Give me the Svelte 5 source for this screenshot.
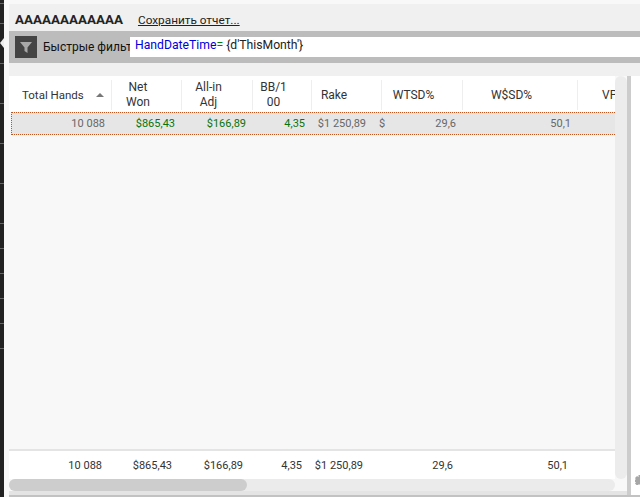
<script lang="ts">
  const ticks = [3, 23, 63, 103, 143, 183, 223, 248, 273, 298, 323, 348];

  const columns = [
    { width: 103, lines: ['Total Hands'], sorted: true },
    { width: 70, lines: ['Net', 'Won'] },
    { width: 71, lines: ['All-in', 'Adj'] },
    { width: 59, lines: ['BB/1', '00'] },
    { width: 70, lines: ['Rake'] },
    { width: 81, lines: ['WTSD%'] },
    { width: 115, lines: ['W$SD%'] },
    { width: 60, lines: ['VP'] }
  ];
  const colTemplate = columns.map((c) => c.width + 'px').join(' ');
  // the selected row is inset by 3px, so its first column is narrower
  const rowTemplate = columns.map((c, i) => (i === 0 ? c.width - 3 : c.width) + 'px').join(' ');
</script>

<div class="window">
  <div class="rail">
    {#each ticks as y}
      <span class="tick" style="top: {y}px"></span>
    {/each}
    <span class="pointer"></span>
  </div>

  <div class="main">
    <div class="title-bar">
      <strong>AAAAAAAAAAAA</strong>
      <span class="save-link">Сохранить отчет...</span>
    </div>

    <div class="filter-bar">
      <button class="filter-btn" aria-label="Filter">
        <svg width="12" height="12" viewBox="0 0 12 12">
          <path d="M0 1h12L7.5 6.5V12L4.5 10V6.5z" fill="#a8a8a8" />
        </svg>
      </button>
      <span class="filter-label">Быстрые фильт</span>
      <div class="filter-input">
        <span class="kw">HandDateTime</span><span class="op">=</span> {"{d'ThisMonth'}"}
      </div>
    </div>

    <div class="gap-strip"></div>

    <div class="content">
      <div class="grid-area">
        <div class="table-wrap">
          <div class="table">
            <div class="head" style="grid-template-columns: {colTemplate}">
              {#each columns as col}
                <div class="head-cell" class:first={col.sorted} class:rake-head={col.lines[0] === 'Rake'}>
                  <span class="head-text">
                    {#each col.lines as line}
                      <span class="line">{line}</span>
                    {/each}
                  </span>
                  {#if col.sorted}
                    <i class="sort"></i>
                  {/if}
                </div>
              {/each}
            </div>

            <div class="row" style="grid-template-columns: {rowTemplate}">
              <div class="num">10 088</div>
              <div class="num green">$865,43</div>
              <div class="num green">$166,89</div>
              <div class="num green">4,35</div>
              <div class="num rake">$1 250,89</div>
              <div class="num split"><span>$</span><span>29,6</span></div>
              <div class="num">50,1</div>
              <div></div>
            </div>

            <div class="body-fill"></div>

            <div class="totals" style="grid-template-columns: {colTemplate}">
              <div class="num">10 088</div>
              <div class="num">$865,43</div>
              <div class="num">$166,89</div>
              <div class="num">4,35</div>
              <div class="num rake">$1 250,89</div>
              <div class="num">29,6</div>
              <div class="num">50,1</div>
              <div></div>
            </div>
          </div>

          <div class="v-scroll"></div>
        </div>

        <div class="h-row">
          <div class="h-scroll"><div class="h-thumb"></div></div>
        </div>

        <div class="under-strip"></div>
      </div>

      <div class="side">
        <svg class="grip" width="10" height="10" viewBox="0 0 10 10">
          <path d="M3.500 0h3v2l1.500-1 2 2-1 1.500h1v2.500h-1l1 1.500-2 2-1.500-1h-3l-1.500 1-2-2 1-1.500h-1v-2.500h1l-1-1.500 2-2 1.500 1z" fill="#a6a6a6" />
        </svg>
      </div>
    </div>

    <div class="bottom-band"></div>
  </div>
</div>

<style>
  :global(body) {
    margin: 0;
    background: #f7f7f7;
    overflow: hidden;
  }

  .window {
    display: flex;
    width: 640px;
    height: 497px;
    font-family: Roboto, "Open Sans", sans-serif;
    font-size: 12px;
    color: #333;
    overflow: hidden;
    background: #f8f8f8;
  }

  .rail {
    position: relative;
    flex: 0 0 4px;
    background: #222;
  }

  .tick {
    position: absolute;
    left: 0;
    width: 4px;
    height: 1px;
    background: #666;
  }

  .pointer {
    position: absolute;
    left: 0;
    top: 38px;
    border: 5px solid transparent;
    border-right: 4px solid #eee;
    border-left: 0;
  }

  .main {
    flex: 1;
    min-width: 0;
    display: flex;
    flex-direction: column;
    padding-left: 5px;
    padding-top: 4px;
    box-sizing: border-box;
  }

  .title-bar {
    flex: none;
    height: 27px;
    display: flex;
    align-items: center;
    gap: 15px;
    padding-left: 6px;
    padding-top: 4px;
    box-sizing: border-box;
    background: #f0f0f0;
    color: #222;
  }

  .title-bar strong {
    font-size: 13.4px;
  }

  .save-link {
    text-decoration: underline;
    font-size: 11.8px;
  }

  .filter-bar {
    flex: none;
    height: 32px;
    display: flex;
    align-items: center;
    background: #bcbcbc;
    padding-left: 6px;
  }

  .filter-btn {
    flex: 0 0 22px;
    height: 22px;
    padding: 0;
    border: 0;
    background: #444;
    display: flex;
    align-items: center;
    justify-content: center;
  }

  .filter-label {
    width: 87px;
    margin-left: 6px;
    flex: none;
    overflow: hidden;
    white-space: nowrap;
    color: #111;
  }

  .filter-input {
    flex: 1;
    height: 20px;
    background: #fff;
    padding-left: 5px;
    font-size: 12.2px;
    line-height: 16px;
    color: #222;
    box-sizing: border-box;
    white-space: nowrap;
  }

  .kw { color: #0000e0; }
  .op { color: #0a7a0a; }

  .gap-strip {
    flex: none;
    height: 13px;
    background: #f0f0f0;
  }

  .content {
    flex: 1;
    min-height: 0;
    display: flex;
  }

  .grid-area {
    flex: 0 0 618px;
    display: flex;
    flex-direction: column;
    background: #f8f8f8;
  }

  .table-wrap {
    flex: 1;
    min-height: 0;
    display: flex;
  }

  .table {
    flex: 0 0 606px;
    overflow: hidden;
    display: flex;
    flex-direction: column;
  }

  .v-scroll {
    flex: 0 0 12px;
    background: #ececec;
    border-radius: 6px;
  }

  .head {
    flex: none;
    display: grid;
    height: 36px;
    background: #fff;
    padding: 4px 0 3px;
    box-sizing: border-box;
  }

  .head-cell {
    display: flex;
    align-items: center;
    justify-content: center;
    text-align: center;
    border-right: 1px solid #eee;
    line-height: 15px;
    padding-right: 17px;
  }

  .head-cell.rake-head {
    padding-right: 25px;
  }

  .head-cell:last-child {
    border-right: 0;
    justify-content: flex-start;
    padding: 0 0 0 24px;
  }

  .head-cell.first {
    justify-content: flex-start;
    padding: 0 0 0 13px;
    white-space: nowrap;
    font-size: 11.5px;
  }

  .line {
    display: block;
  }

  .sort {
    margin-left: 12px;
    border: 4px solid transparent;
    border-bottom: 4px solid #777;
    border-top: 0;
  }

  .row, .totals {
    flex: none;
    display: grid;
    font-size: 11px;
  }

  .row {
    height: 23px;
    margin-left: 2px;
    align-items: center;
    background: #e6e6e6;
    border-top: 1px dotted #c0561e;
    border-bottom: 1px dotted #c0561e;
    border-left: 1px dotted #c0561e;
    box-sizing: border-box;
    color: #666;
  }

  .num {
    text-align: right;
    padding-right: 7px;
    white-space: nowrap;
  }

  .rake {
    padding-right: 16px;
  }

  .green { color: #0a730a; }

  .split {
    display: flex;
    justify-content: space-between;
  }

  .split span:first-child {
    margin-left: -3px;
  }

  .body-fill {
    flex: 1;
  }

  .totals {
    height: 30px;
    align-items: center;
    background: #fff;
    border-top: 2px solid #e4e4e4;
    box-sizing: border-box;
    color: #333;
  }

  .totals .num {
    padding-right: 10px;
  }

  .totals .rake {
    padding-right: 19px;
  }

  .h-row {
    flex: none;
    height: 12px;
  }

  .h-scroll {
    width: 606px;
    height: 100%;
    background: #ebebeb;
    border-radius: 6px;
  }

  .h-thumb {
    width: 238px;
    height: 100%;
    background: #cdcdcd;
    border-radius: 6px;
  }

  .under-strip {
    flex: none;
    height: 4px;
    background: #e4e4e4;
  }

  .bottom-band {
    flex: none;
    height: 2px;
    background: #c2c2c2;
  }

  .side {
    flex: 1;
    position: relative;
    background: #fff;
    border-left: 4px solid #ccc;
  }

  .grip {
    position: absolute;
    right: -5px;
    bottom: 10px;
  }
</style>
